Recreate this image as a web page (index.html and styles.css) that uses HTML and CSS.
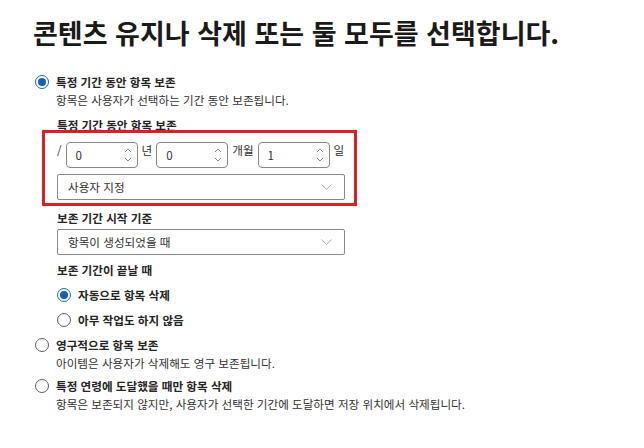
FILE: index.html
```html
<!DOCTYPE html>
<html lang="ko">
<head>
<meta charset="utf-8">
<link rel="stylesheet" href="styles.css">
</head>
<body>
<main class="page">
  <h1 class="title">콘텐츠 유지나 삭제 또는 둘 모두를 선택합니다.</h1>

  <div class="options">
    <div class="option">
      <span class="radio checked"></span>
      <div class="option-body">
        <div class="opt-label">특정 기간 동안 항목 보존</div>
        <div class="opt-desc">항목은 사용자가 선택하는 기간 동안 보존됩니다.</div>
      </div>
    </div>

    <div class="sub">
      <div class="field-label">특정 기간 동안 항목 보존</div>
      <div class="highlight">
        <div class="period-row">
          <span class="unit">/</span>
          <div class="spin"><span class="spin-val">0</span>
            <svg class="spin-arrows" width="8" height="20" viewBox="0 0 8 20"><path d="M1 7 L4 4 L7 7" fill="none" stroke="#8a8886" stroke-width="1"/><path d="M1 13 L4 16 L7 13" fill="none" stroke="#8a8886" stroke-width="1"/></svg>
          </div>
          <span class="unit">년</span>
          <div class="spin"><span class="spin-val">0</span>
            <svg class="spin-arrows" width="8" height="20" viewBox="0 0 8 20"><path d="M1 7 L4 4 L7 7" fill="none" stroke="#8a8886" stroke-width="1"/><path d="M1 13 L4 16 L7 13" fill="none" stroke="#8a8886" stroke-width="1"/></svg>
          </div>
          <span class="unit">개월</span>
          <div class="spin"><span class="spin-val">1</span>
            <svg class="spin-arrows" width="8" height="20" viewBox="0 0 8 20"><path d="M1 7 L4 4 L7 7" fill="none" stroke="#8a8886" stroke-width="1"/><path d="M1 13 L4 16 L7 13" fill="none" stroke="#8a8886" stroke-width="1"/></svg>
          </div>
          <span class="unit">일</span>
        </div>
        <div class="select"><span>사용자 지정</span>
          <svg class="chev" width="11" height="6" viewBox="0 0 11 6"><path d="M0.5 0.5 L5.5 5.3 L10.5 0.5" fill="none" stroke="#a19f9d" stroke-width="0.9"/></svg>
        </div>
      </div>

      <div class="field-label gap-top">보존 기간 시작 기준</div>
      <div class="select select-2"><span>항목이 생성되었을 때</span>
        <svg class="chev" width="11" height="6" viewBox="0 0 11 6"><path d="M0.5 0.5 L5.5 5.3 L10.5 0.5" fill="none" stroke="#a19f9d" stroke-width="0.9"/></svg>
      </div>

      <div class="field-label gap-top2">보존 기간이 끝날 때</div>
      <div class="sub-option first">
        <span class="radio checked"></span>
        <span class="opt-label">자동으로 항목 삭제</span>
      </div>
      <div class="sub-option">
        <span class="radio"></span>
        <span class="opt-label">아무 작업도 하지 않음</span>
      </div>
    </div>

    <div class="option opt-gap">
      <span class="radio"></span>
      <div class="option-body">
        <div class="opt-label">영구적으로 항목 보존</div>
        <div class="opt-desc">아이템은 사용자가 삭제해도 영구 보존됩니다.</div>
      </div>
    </div>

    <div class="option opt-gap2">
      <span class="radio"></span>
      <div class="option-body">
        <div class="opt-label">특정 연령에 도달했을 때만 항목 삭제</div>
        <div class="opt-desc">항목은 보존되지 않지만, 사용자가 선택한 기간에 도달하면 저장 위치에서 삭제됩니다.</div>
      </div>
    </div>
  </div>
</main>
</body>
</html>
```

FILE: styles.css
```css
* { box-sizing: border-box; }

body {
  margin: 0;
  background: #ffffff;
  color: #323130;
  font-family: "Noto Sans CJK KR", "Noto Sans", sans-serif;
  font-size: 11.6px;
}

.page {
  display: flex;
  flex-direction: column;
  padding: 16px 0 0 33px;
}

.title {
  margin: 0;
  font-size: 27px;
  line-height: 34px;
  font-weight: 700;
  color: #1b1a19;
}

.options {
  display: flex;
  flex-direction: column;
  margin-top: 23px;
  padding-left: 2px;
}

.option {
  display: flex;
  align-items: flex-start;
  gap: 7px;
}

.opt-gap { margin-top: 7px; }
.opt-gap2 { margin-top: 5px; }

.option .radio { margin-top: 2px; }

.radio {
  flex: none;
  width: 14px;
  height: 14px;
  border: 1px solid #605e5c;
  border-radius: 50%;
  background: #fff;
  display: flex;
  align-items: center;
  justify-content: center;
}

.radio.checked { border-color: #0f6cbd; }

.radio.checked::after {
  content: "";
  width: 8px;
  height: 8px;
  border-radius: 50%;
  background: #1a5fb4;
}

.opt-label {
  font-weight: 700;
  line-height: 18px;
  color: #252423;
}

.opt-desc {
  line-height: 18px;
  color: #323130;
}

.sub {
  display: flex;
  flex-direction: column;
  padding-left: 22px;
  width: 310px;
}

.field-label {
  font-weight: 700;
  line-height: 18px;
  margin-top: 7px;
  color: #252423;
}

.gap-top { margin-top: 3px; }
.gap-top2 { margin-top: 6px; }

.highlight {
  display: flex;
  flex-direction: column;
  gap: 6px;
  margin: -4px 0 0 -15px;
  width: 315px;
  border: 3px solid #dc1f26;
  padding: 9px 9px 3px 12px;
}

.period-row {
  display: flex;
  align-items: flex-start;
  gap: 4px;
}

.unit {
  line-height: 16px;
  color: #323130;
}

.spin {
  width: 72px;
  height: 26px;
  border: 1px solid #8a8886;
  border-radius: 4px;
  display: flex;
  align-items: center;
  justify-content: space-between;
  padding: 0 5px 0 9px;
}

.spin-val { line-height: 16px; }

.select {
  height: 26px;
  border: 1px solid #8a8886;
  border-radius: 2px;
  display: flex;
  align-items: center;
  justify-content: space-between;
  padding: 0 12px 0 10px;
  width: 288px;
}

.select-2 { margin-top: 2px; }

.sub-option {
  display: flex;
  align-items: center;
  gap: 7px;
  height: 18px;
  margin-top: 7px;
}

.sub-option.first { margin-top: 7px; }
```
